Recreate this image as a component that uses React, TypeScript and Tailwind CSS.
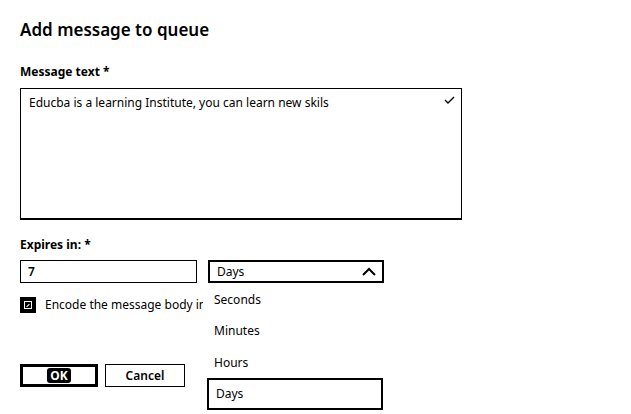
import React from 'react';

function ChevronUp() {
    return (
        <svg width="14" height="9" viewBox="0 0 14 9" fill="none">
            <path d="M1 8 L7 2 L13 8" stroke="black" strokeWidth="2" />
        </svg>
    );
}

function CheckMark() {
    return (
        <svg width="11" height="8" viewBox="0 0 11 8" fill="none">
            <path d="M1 4 L4 7 L10 1" stroke="black" strokeWidth="1.4" />
        </svg>
    );
}

export default function App() {
    const options = ['Seconds', 'Minutes', 'Hours'];

    return (
        <div
            className="relative w-[631px] h-[414px] bg-white text-black overflow-hidden pl-[20px]"
            style={{ fontFamily: '"Noto Sans", "Open Sans", sans-serif' }}
        >
            {/* Title */}
            <h1 className="pt-[18px] text-[17px] leading-[24px] font-semibold">Add message to queue</h1>

            {/* Message text */}
            <div className="mt-[22px] text-[12px] leading-[16px] font-bold">Message text *</div>
            <div className="mt-[8px] w-[442px] h-[132px] border border-black border-b-2 flex items-start justify-between px-[8px] pt-[5px]">
                <span className="text-[12px] leading-[18px]">Educba is a learning Institute, you can learn new skils</span>
                <span className="mt-[2px] mr-[-2px]"><CheckMark /></span>
            </div>

            {/* Expires in */}
            <div className="mt-[17px] text-[12px] leading-[16px] font-bold">Expires in: *</div>
            <div className="mt-[7px] flex gap-[11px]">
                <div className="w-[177px] h-[23px] border border-black px-[7px] flex items-center text-[12px] font-semibold">7</div>
                <div className="w-[176px] h-[23px] border-2 border-black pl-[7px] pr-[6px] flex items-center justify-between text-[12px]">
                    <span>Days</span>
                    <ChevronUp />
                </div>
            </div>

            {/* Encode checkbox */}
            <div className="mt-[13px] flex items-center gap-[9px]">
                <div className="w-[16px] h-[16px] bg-black flex items-center justify-center">
                    <div className="w-[8px] h-[8px] border border-white flex items-end justify-start">
                        <div className="w-[4px] h-[1px] bg-white rotate-[-45deg] mb-[2px] ml-[1px]" />
                    </div>
                </div>
                <span className="w-[158px] overflow-hidden whitespace-nowrap text-[12px] leading-[18px]">
                    Encode the message body in Base64
                </span>
            </div>

            {/* Buttons */}
            <div className="mt-[50px] flex gap-[7px]">
                <button className="w-[78px] h-[23px] border-[3px] border-black flex items-center justify-center">
                    <span className="bg-black text-white text-[12px] leading-[15px] font-bold px-[3px] rounded-[3px]">OK</span>
                </button>
                <button className="w-[80px] h-[23px] border border-black flex items-center justify-center text-[12px] font-semibold">
                    Cancel
                </button>
            </div>

            {/* Dropdown list */}
            <div className="absolute left-[207px] top-[284px] w-[176px] bg-white">
                {options.map((o) => (
                    <div key={o} className="h-[31.5px] pl-[7px] flex items-center text-[12px]">{o}</div>
                ))}
                <div className="h-[32px] pl-[7px] flex items-center text-[12px] border-2 border-black mt-[-1px]">Days</div>
            </div>
        </div>
    );
}
